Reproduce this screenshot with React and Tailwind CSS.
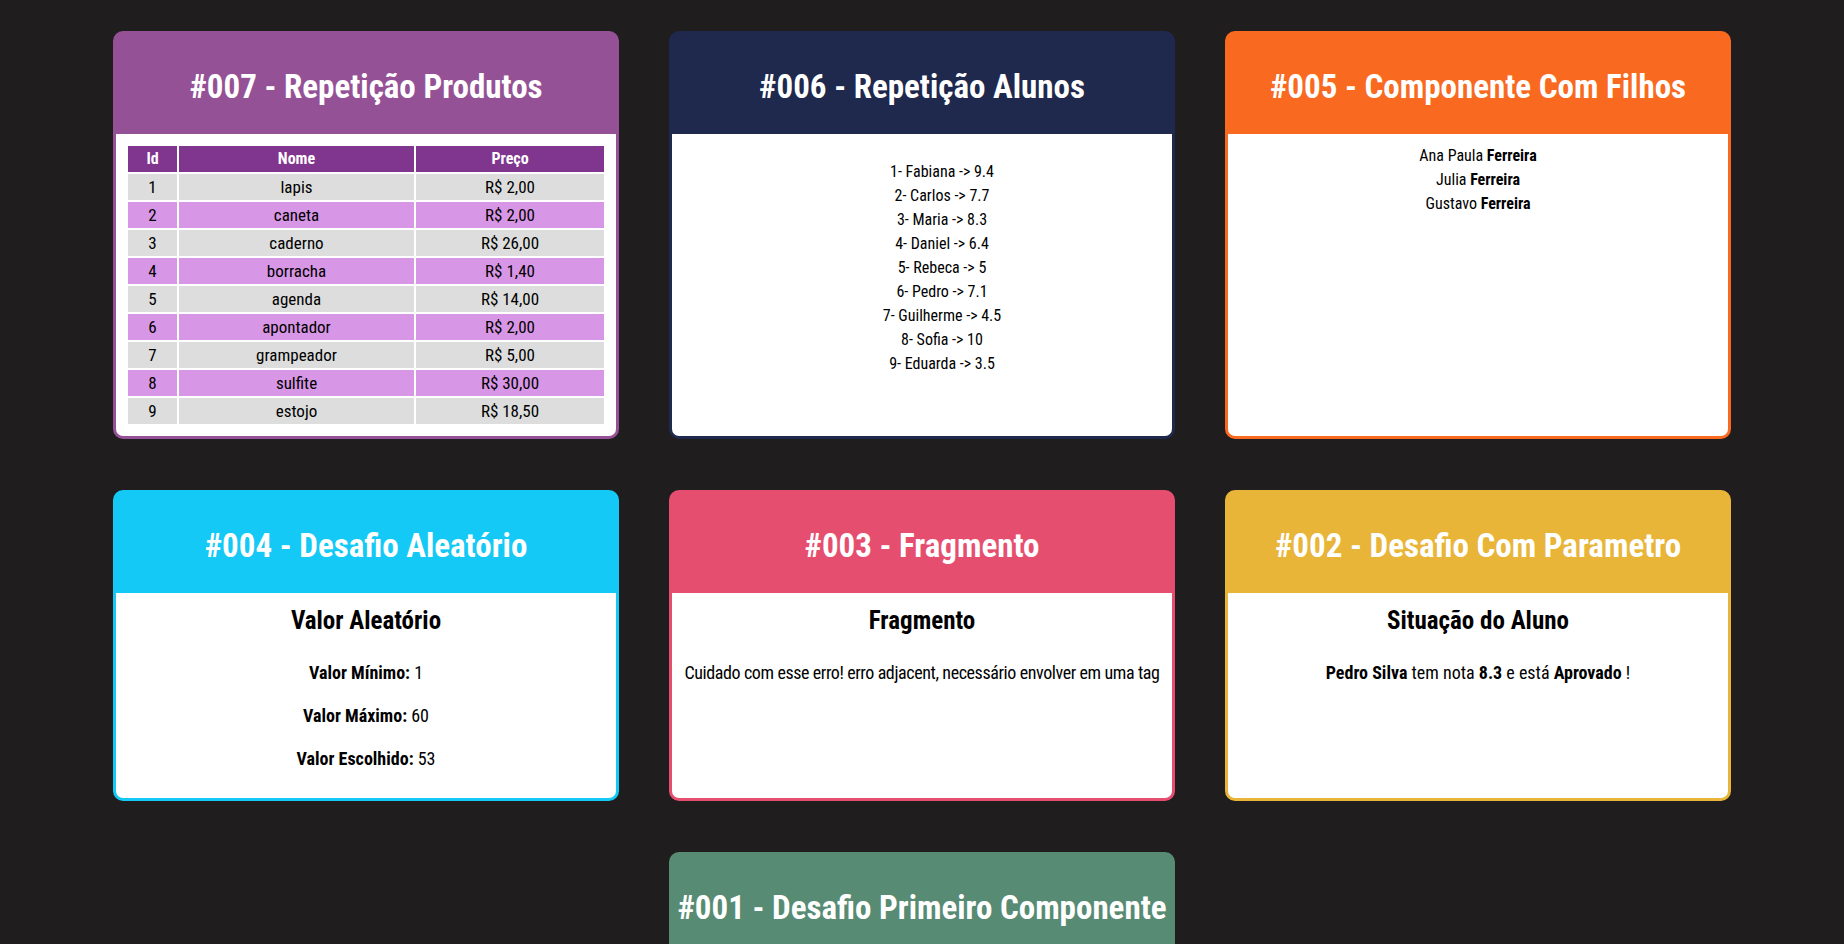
import React from 'react';

const produtos = [
  { id: 1, nome: 'lapis', preco: 'R$ 2,00' },
  { id: 2, nome: 'caneta', preco: 'R$ 2,00' },
  { id: 3, nome: 'caderno', preco: 'R$ 26,00' },
  { id: 4, nome: 'borracha', preco: 'R$ 1,40' },
  { id: 5, nome: 'agenda', preco: 'R$ 14,00' },
  { id: 6, nome: 'apontador', preco: 'R$ 2,00' },
  { id: 7, nome: 'grampeador', preco: 'R$ 5,00' },
  { id: 8, nome: 'sulfite', preco: 'R$ 30,00' },
  { id: 9, nome: 'estojo', preco: 'R$ 18,50' },
];

const alunos = [
  ['Fabiana', 9.4],
  ['Carlos', 7.7],
  ['Maria', 8.3],
  ['Daniel', 6.4],
  ['Rebeca', 5],
  ['Pedro', 7.1],
  ['Guilherme', 4.5],
  ['Sofia', 10],
  ['Eduarda', 3.5],
];

const Card = ({ titulo, cor, children }) => (
  <div className={`w-[506px] rounded-[10px] border-[3px] overflow-hidden flex flex-col ${cor}`}>
    <div className="h-[100px] flex items-center justify-center pt-[6px]">
      <h1 className="text-[33px] font-bold text-white leading-[48px] whitespace-nowrap">{titulo}</h1>
    </div>
    <div className="flex-1 bg-white p-[10px] text-center text-black">{children}</div>
  </div>
);

const Subtitulo = ({ children }) => (
  <h2 className="text-[25px] font-bold leading-[36px] mb-[20px]">{children}</h2>
);

const App = () => {
  return (
    <div className="min-h-screen bg-[#1f1d1e] pt-[31px] pb-[50px] font-['Roboto_Condensed','Open_Sans',sans-serif] leading-[1.5]">
      <div className="flex flex-wrap justify-center gap-x-[50px] gap-y-[51px]">
        <Card titulo="#007 - Repetição Produtos" cor="border-[#955196] bg-[#955196]">
          <table className="w-full border-separate border-spacing-[2px] text-[17px]">
            <thead>
              <tr className="bg-[#80358f] text-white text-[16px] font-bold">
                <th className="w-[49px] h-[26px]">Id</th>
                <th className="w-[235px] h-[26px]">Nome</th>
                <th className="h-[26px]">Preço</th>
              </tr>
            </thead>
            <tbody>
              {produtos.map((p, i) => (
                <tr key={p.id} className={i % 2 === 0 ? 'bg-[#dddddd]' : 'bg-[#d897e6]'}>
                  <td className="h-[26px] leading-[24px]">{p.id}</td>
                  <td className="h-[26px] leading-[24px]">{p.nome}</td>
                  <td className="h-[26px] leading-[24px]">{p.preco}</td>
                </tr>
              ))}
            </tbody>
          </table>
        </Card>

        <Card titulo="#006 - Repetição Alunos" cor="border-[#1f284d] bg-[#1f284d]">
          <ul className="mt-[16px] pl-[40px] text-[16px] leading-[24px]">
            {alunos.map(([nome, nota], i) => (
              <li key={nome}>{`${i + 1}- ${nome} -> ${nota}`}</li>
            ))}
          </ul>
        </Card>

        <Card titulo="#005 - Componente Com Filhos" cor="border-[#f9691f] bg-[#f9691f]">
          <div className="text-[16px] leading-[24px]">
            <p>Ana Paula <b>Ferreira</b></p>
            <p>Julia <b>Ferreira</b></p>
            <p>Gustavo <b>Ferreira</b></p>
          </div>
        </Card>

        <Card titulo="#004 - Desafio Aleatório" cor="border-[#14c9f5] bg-[#14c9f5]">
          <Subtitulo>Valor Aleatório</Subtitulo>
          <div className="text-[18px] leading-[27px] flex flex-col gap-[16px] pb-[16px]">
            <p><b>Valor Mínimo:</b> 1</p>
            <p><b>Valor Máximo:</b> 60</p>
            <p><b>Valor Escolhido:</b> 53</p>
          </div>
        </Card>

        <Card titulo="#003 - Fragmento" cor="border-[#e64e70] bg-[#e64e70]">
          <Subtitulo>Fragmento</Subtitulo>
          <p className="text-[18px] leading-[27px] tracking-[-0.4px] whitespace-nowrap">
            Cuidado com esse erro! erro adjacent, necessário envolver em uma tag
          </p>
        </Card>

        <Card titulo="#002 - Desafio Com Parametro" cor="border-[#e8b538] bg-[#e8b538]">
          <Subtitulo>Situação do Aluno</Subtitulo>
          <p className="text-[18px] leading-[27px]">
            <b>Pedro Silva</b> tem nota <b>8.3</b> e está <b>Aprovado</b> !
          </p>
        </Card>

        <Card titulo="#001 - Desafio Primeiro Componente" cor="border-[#578b73] bg-[#578b73]">
          <Subtitulo>Primeiro Componente</Subtitulo>
          <p className="text-[18px] leading-[27px] pb-[16px]">Olá, React!</p>
        </Card>
      </div>
    </div>
  );
};

export default App;
